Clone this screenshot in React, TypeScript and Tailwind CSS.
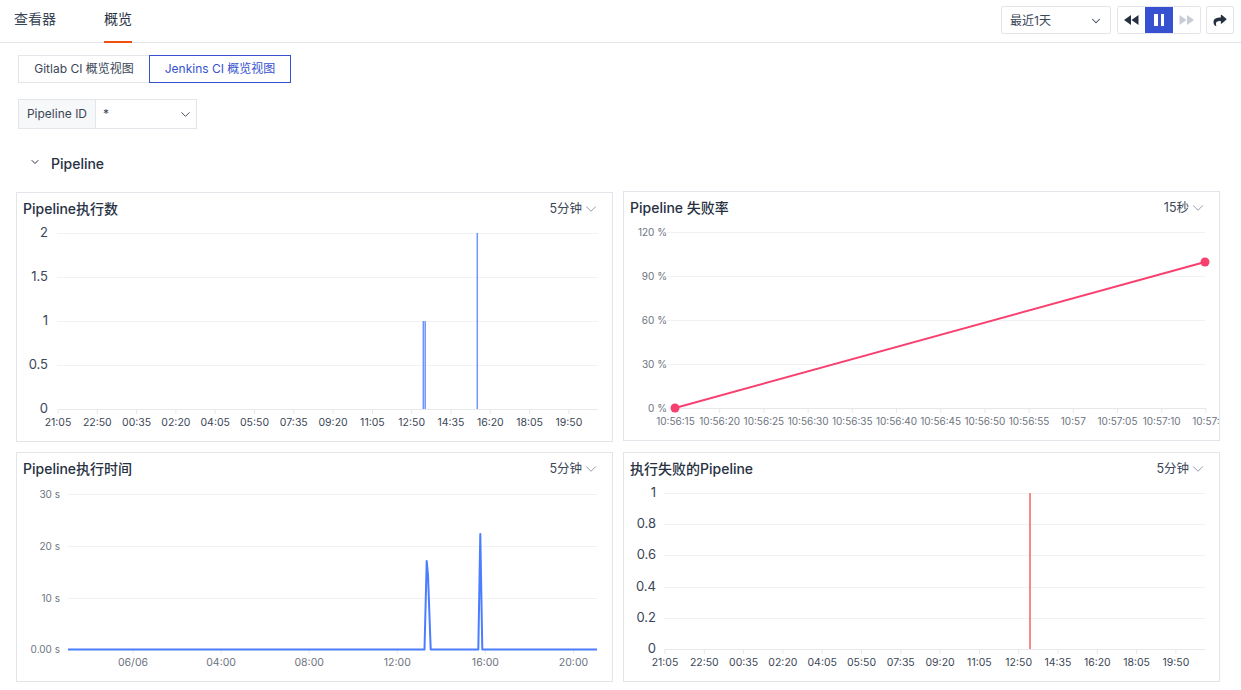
import { ChevronDown } from "lucide-react";
import { FaShare } from "react-icons/fa";
import type { ReactNode } from "react";

const FONT = "font-['Inter','Noto_Sans_CJK_SC',sans-serif]";
const SVGFONT = "Inter, 'Noto Sans CJK SC', sans-serif";

const times = ["21:05", "22:50", "00:35", "02:20", "04:05", "05:50", "07:35", "09:20", "11:05", "12:50", "14:35", "16:20", "18:05", "19:50"];
const sec = ["10:56:15", "10:56:20", "10:56:25", "10:56:30", "10:56:35", "10:56:40", "10:56:45", "10:56:50", "10:56:55", "10:57", "10:57:05", "10:57:10", "10:57:"];

function Card({ title, interval, className, children }: { title: string; interval: string; className: string; children: ReactNode }) {
  return (
    <div className={`flex flex-col border border-[#e3e5ea] bg-white ${className}`}>
      <div className="flex h-[28px] shrink-0 items-center justify-between pl-[6px] pr-[12px] pt-[3px]">
        <span className="text-[14px] font-medium leading-5 text-[#273142]">{title}</span>
        <span className="flex items-center text-[12.5px] leading-4 text-[#3b4656]">
          {interval}
          <ChevronDown className="h-[18px] w-[18px] text-[#8a94a6]" strokeWidth={1.25} />
        </span>
      </div>
      {children}
    </div>
  );
}

function Plot({ x, y, w, h, children }: { x: number; y: number; w: number; h: number; children: ReactNode }) {
  return (
    <svg className="block" width={w} height={h} viewBox={`${x} ${y} ${w} ${h}`} style={{ fontFamily: SVGFONT }}>
      {children}
    </svg>
  );
}

function Grid({ x1, x2, ys }: { x1: number; x2: number; ys: number[] }) {
  return (
    <>
      {ys.map((y) => (
        <line key={y} x1={x1} x2={x2} y1={y + 0.5} y2={y + 0.5} stroke="#f1f2f4" />
      ))}
    </>
  );
}

function YLabels({ x, items, size, dy = 0 }: { x: number; items: [string, number][]; size: number; dy?: number }) {
  return (
    <>
      {items.map(([t, y]) => (
        <text key={t} x={x} y={y + dy + size * 0.36} textAnchor="end" fontSize={size} fill={size > 11 ? "#3b4656" : "#6d7480"}>
          {t}
        </text>
      ))}
    </>
  );
}

function XAxis({ labels, start, step, axisY, x2, size, fill }: { labels: string[]; start: number; step: number; axisY: number; x2: number; size: number; fill: string }) {
  return (
    <>
      <line x1={start} x2={x2} y1={axisY + 0.5} y2={axisY + 0.5} stroke="#e6e8ec" />
      {labels.map((t, i) => {
        const cx = start + step * i;
        return (
          <g key={t}>
            <line x1={cx} x2={cx} y1={axisY} y2={axisY + 5} stroke="#e6e8ec" />
            <text x={cx} y={axisY + 17} textAnchor="middle" fontSize={size} fill={fill}>
              {t}
            </text>
          </g>
        );
      })}
    </>
  );
}

function Rewind({ color, flip }: { color: string; flip?: boolean }) {
  return (
    <svg width="15" height="10" viewBox="0 0 15 10" style={flip ? { transform: "scaleX(-1)" } : undefined}>
      <path d="M7 0v10L0 5zM14.5 0v10L7.5 5z" fill={color} />
    </svg>
  );
}

export default function App() {
  return (
    <div className={`${FONT} h-[690px] w-[1241px] overflow-hidden bg-white text-[#273142]`}>
      <header className="flex h-[43px] items-stretch justify-between border-b border-[#e3e5ea] pl-[14px] pr-[7px]">
        <nav className="flex gap-[48px] text-[14px]">
          <span className="flex items-center pb-[6px] text-[#3b4656]">查看器</span>
          <span className="relative flex items-center pb-[6px] text-[#273142]">
            概览
            <span className="absolute bottom-[-1px] left-0 h-[2px] w-full bg-[#f0500f]" />
          </span>
        </nav>
        <div className="flex items-start gap-[5px] pt-[6px]">
          <div className="flex h-[28px] w-[110px] items-center justify-between rounded-[2px] border border-[#e3e5ea] pl-[8px] pr-[7px] pt-[1px] text-[12px] text-[#3b4656]">
            最近1天
            <ChevronDown className="h-[14px] w-[14px]" strokeWidth={1.75} />
          </div>
          <div className="ml-[1px] flex h-[28px] w-[84px] overflow-hidden rounded-[2px] border border-[#e3e5ea]">
            <span className="flex w-[27px] items-center justify-center"><Rewind color="#273142" /></span>
            <span className="flex w-[28px] items-center justify-center gap-[3px] bg-[#3652d0]">
              <span className="h-[12px] w-[3.5px] bg-white" />
              <span className="h-[12px] w-[3.5px] bg-white" />
            </span>
            <span className="flex w-[27px] items-center justify-center"><Rewind color="#c8ccd6" flip /></span>
          </div>
          <div className="flex h-[28px] w-[28px] items-center justify-center rounded-[2px] border border-[#e3e5ea]">
            <FaShare className="h-[13px] w-[14px] text-[#273142]" />
          </div>
        </div>
      </header>

      <main className="pl-[16px]">
        <div className="ml-[2px] mt-[12px] flex h-[28px] text-[12px]">
          <span className="flex w-[131px] items-center justify-center border border-r-0 border-[#e3e5ea] text-[#3b4656]">Gitlab CI 概览视图</span>
          <span className="flex w-[142px] items-center justify-center border border-[#3652d0] text-[#3652d0]">Jenkins CI 概览视图</span>
        </div>

        <div className="ml-[2px] mt-[16px] flex h-[30px] w-[179px] border border-[#e3e5ea] text-[12px] text-[#3b4656]">
          <span className="flex w-[77px] items-center justify-center border-r border-[#e3e5ea] bg-[#f7f8fa]">Pipeline ID</span>
          <span className="flex flex-1 items-center justify-between pl-[7px] pr-[3px]">
            *
            <ChevronDown className="h-[15px] w-[15px]" strokeWidth={1.5} />
          </span>
        </div>

        <div className="mt-[25px] flex h-[20px] items-center pb-[2px] pl-[13px] text-[14px] font-medium text-[#273142]">
          <ChevronDown className="mr-[10px] h-[12px] w-[12px] -translate-y-[1px]" strokeWidth={2} />
          Pipeline
        </div>

        <div className="mt-[17px] flex gap-[10px]">
          <div className="flex w-[597px] flex-col gap-[10px] pt-[1px]">
            <Card title="Pipeline执行数" interval="5分钟" className="h-[250px]">
              <Plot x={17} y={221} w={595} h={220}>
                <Grid x1={57} x2={598} ys={[233, 277, 321, 365]} />
                <YLabels x={48} size={13} dy={-1} items={[["2", 233], ["1.5", 277], ["1", 321], ["0.5", 365], ["0", 409]]} />
                <XAxis labels={times} start={58} step={39.3} axisY={409} x2={598} size={10.5} fill="#3b4656" />
                <path d="M423.3 409V321M425.2 321V409M477.3 409V233" stroke="#6f96ff" strokeWidth="1.5" fill="none" />
              </Plot>
            </Card>
            <Card title="Pipeline执行时间" interval="5分钟" className="h-[230px]">
              <Plot x={17} y={481} w={595} h={200}>
                <Grid x1={68} x2={597} ys={[494, 546, 598]} />
                <YLabels x={60} size={10} items={[["30 s", 494], ["20 s", 546], ["10 s", 598], ["0.00 s", 649]]} />
                {["06/06", "04:00", "08:00", "12:00", "16:00", "20:00"].map((t, i) => {
                  const cx = 133 + i * 88.1;
                  return (
                    <g key={t}>
                      <line x1={cx} x2={cx} y1={650} y2={654} stroke="#e6e8ec" />
                      <text x={cx} y={666} textAnchor="middle" fontSize={10.5} fill="#6d7480">{t}</text>
                    </g>
                  );
                })}
                <path d="M68 649.5H424.5L426.7 561L428 575L430.7 649.5H478.3L480.3 534L482.3 649.5H597" stroke="#4a7dff" strokeWidth="2" fill="none" strokeLinejoin="round" />
              </Plot>
            </Card>
          </div>
          <div className="flex w-[597px] flex-col gap-[11px]">
            <Card title="Pipeline 失败率" interval="15秒" className="h-[250px]">
              <Plot x={624} y={220} w={595} h={220}>
                <Grid x1={667} x2={1205} ys={[232, 276, 320, 364]} />
                <YLabels x={667} size={10} items={[["120 %", 232], ["90 %", 276], ["60 %", 320], ["30 %", 364], ["0 %", 408]]} />
                <XAxis labels={sec} start={675.5} step={44.2} axisY={408} x2={1206} size={10} fill="#6d7480" />
                <line x1={675} y1={408} x2={1205} y2={262} stroke="#f8406f" strokeWidth="2" />
                <circle cx={675} cy={408} r={4.5} fill="#f8406f" />
                <circle cx={1205} cy={262} r={4.5} fill="#f8406f" />
              </Plot>
            </Card>
            <Card title="执行失败的Pipeline" interval="5分钟" className="h-[230px]">
              <Plot x={624} y={481} w={595} h={200}>
                <Grid x1={664} x2={1205} ys={[493, 524, 555, 587, 618]} />
                <YLabels x={656} size={13} dy={-1} items={[["1", 493], ["0.8", 524], ["0.6", 555], ["0.4", 587], ["0.2", 618], ["0", 649]]} />
                <XAxis labels={times} start={665} step={39.3} axisY={649} x2={1205} size={10.5} fill="#3b4656" />
                <line x1={1030} x2={1030} y1={493} y2={649} stroke="#f0645f" strokeWidth="1.5" />
              </Plot>
            </Card>
          </div>
        </div>
      </main>
    </div>
  );
}
